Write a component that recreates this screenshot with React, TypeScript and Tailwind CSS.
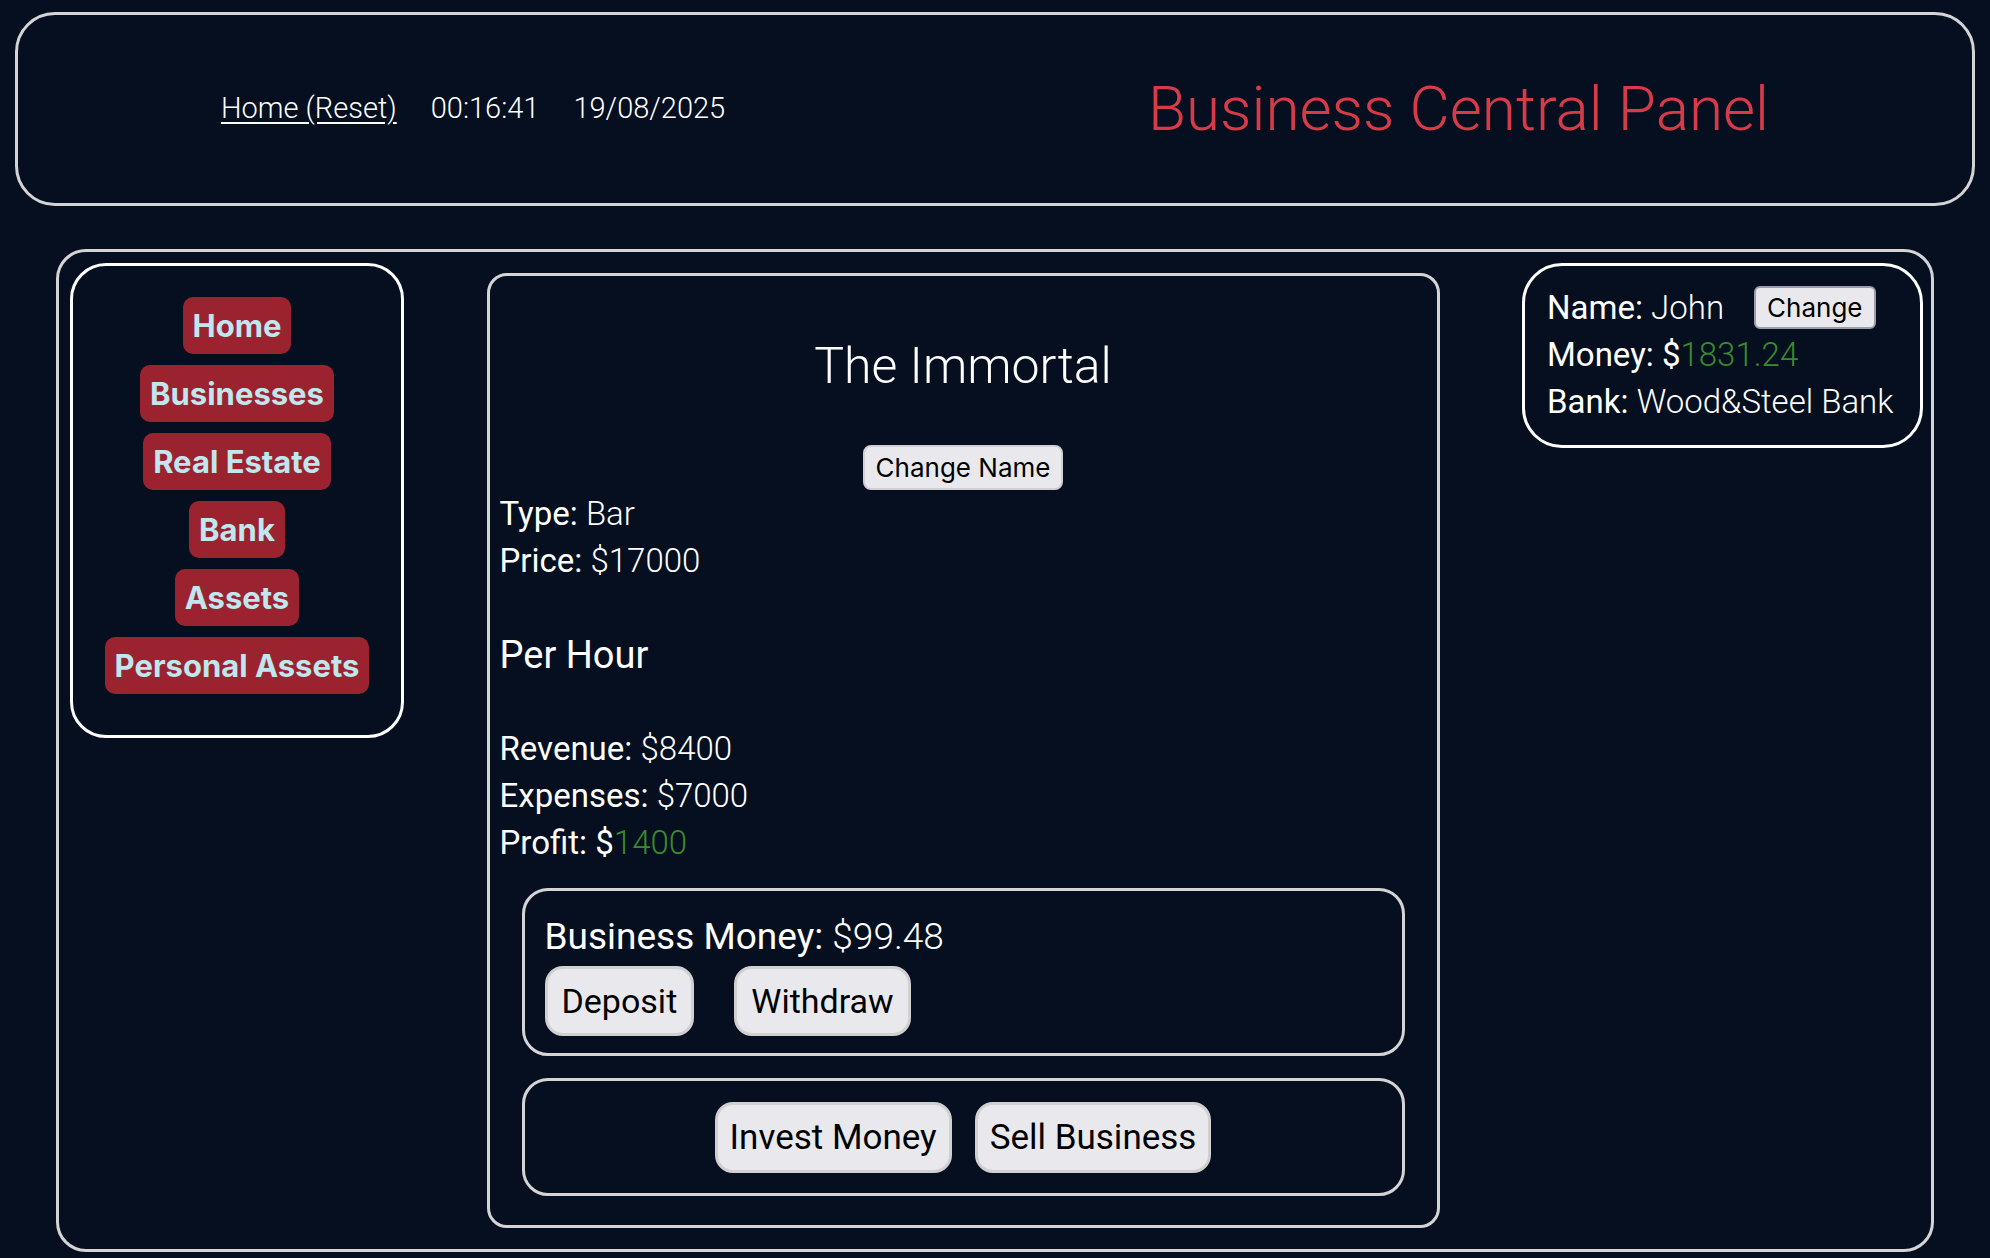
import React from "react"

const navItems = ["Home", "Businesses", "Real Estate", "Bank", "Assets", "Personal Assets"]

function Stat({ label, value, green }: { label: string; value: string; green?: boolean }) {
  return (
    <div>
      <span className="font-normal">{label}: </span>
      {green ? (
        <span className="font-normal">
          $<span className="font-light text-[#3a8a2a]">{value}</span>
        </span>
      ) : (
        <span className="font-light">{value}</span>
      )}
    </div>
  )
}

export default function App() {
  return (
    <div className="min-h-[1258px] bg-[#050f20] text-white font-['Roboto',sans-serif] pt-[12px] px-[15px] pb-[5px] flex flex-col gap-[43px] overflow-hidden">
      {/* Top bar */}
      <header className="h-[194px] border-[3px] border-[#d4d4d4] rounded-[40px] flex items-center justify-between px-[203px]">
        <div className="flex items-center gap-[34px] text-[29px] font-light">
          <a href="#" className="underline underline-offset-4">Home (Reset)</a>
          <span>00:16:41</span>
          <span>19/08/2025</span>
        </div>
        <h1 className="text-[62px] font-light text-[#d83a48] leading-none">Business Central Panel</h1>
      </header>

      {/* Main area */}
      <main className="mx-[41px] h-[1003px] border-[3px] border-[#d4d4d4] rounded-[30px] flex items-start justify-between pl-[11px] pr-[8px] pt-[11px]">
        {/* Sidebar nav */}
        <nav className="w-[334px] border-[3px] border-white rounded-[36px] pt-[31px] pb-[41px] flex flex-col items-center gap-[11px] font-['Inter',sans-serif]">
          {navItems.map((item) => (
            <button
              key={item}
              className="bg-[#9b2330] text-[#c0e6ee] font-bold text-[31px] leading-[39px] py-[9px] px-[10px] rounded-[10px]"
            >
              {item}
            </button>
          ))}
        </nav>

        {/* Business details */}
        <section className="mt-[10px] w-[953px] h-[955px] border-[3px] border-[#d4d4d4] rounded-[20px] px-[10px] text-[33px] leading-[47px]">
          <h2 className="text-center text-[50px] font-light mt-[55px] leading-[70px]">The Immortal</h2>
          <div className="flex justify-center mt-[44px]">
            <button className="bg-[#e9e9ed] text-black border-2 border-[#cfcfd4] rounded-[8px] h-[45px] px-[11px] text-[26px] leading-none font-['Inter',sans-serif]">
              Change Name
            </button>
          </div>
          <div className="mt-0">
            <Stat label="Type" value="Bar" />
            <Stat label="Price" value="$17000" />
          </div>
          <h3 className="text-[38px] font-normal mt-[46px] leading-[50px]">Per Hour</h3>
          <div className="mt-[45px]">
            <Stat label="Revenue" value="$8400" />
            <Stat label="Expenses" value="$7000" />
            <Stat label="Profit" value="1400" green />
          </div>

          <div className="mt-[22px] mx-[22px] border-[3px] border-[#d4d4d4] rounded-[26px] h-[168px] px-[20px] pt-[22px]">
            <div className="text-[37px] leading-[48px]">
              <span className="font-normal">Business Money: </span>
              <span className="font-light">$99.48</span>
            </div>
            <div className="flex gap-[40px] mt-[5px]">
              <button className="bg-[#e9e9ed] text-black border-[3px] border-[#d0d0d0] rounded-[18px] h-[70px] px-[14px] text-[34px]">
                Deposit
              </button>
              <button className="bg-[#e9e9ed] text-black border-[3px] border-[#d0d0d0] rounded-[18px] h-[70px] px-[14px] text-[34px]">
                Withdraw
              </button>
            </div>
          </div>

          <div className="mt-[22px] mx-[22px] border-[3px] border-[#d4d4d4] rounded-[26px] h-[118px] flex items-center justify-center gap-[23px]">
            <button className="bg-[#e9e9ed] text-black border-[3px] border-[#d0d0d0] rounded-[18px] h-[71px] px-[12px] text-[35px]">
              Invest Money
            </button>
            <button className="bg-[#e9e9ed] text-black border-[3px] border-[#d0d0d0] rounded-[18px] h-[71px] px-[12px] text-[35px]">
              Sell Business
            </button>
          </div>
        </section>

        {/* Player info */}
        <aside className="w-[401px] border-[3px] border-white rounded-[40px] pl-[22px] pt-[18px] pb-[20px] text-[33px] leading-[47px]">
          <div className="flex items-center">
            <span className="font-normal">Name:&nbsp;</span>
            <span className="font-light">John</span>
            <button className="ml-[30px] bg-[#e9e9ed] text-black border-2 border-[#9d9da6] rounded-[6px] h-[43px] px-[11px] text-[26px] leading-none font-['Inter',sans-serif]">
              Change
            </button>
          </div>
          <Stat label="Money" value="1831.24" green />
          <Stat label="Bank" value="Wood&Steel Bank" />
        </aside>
      </main>
    </div>
  )
}
